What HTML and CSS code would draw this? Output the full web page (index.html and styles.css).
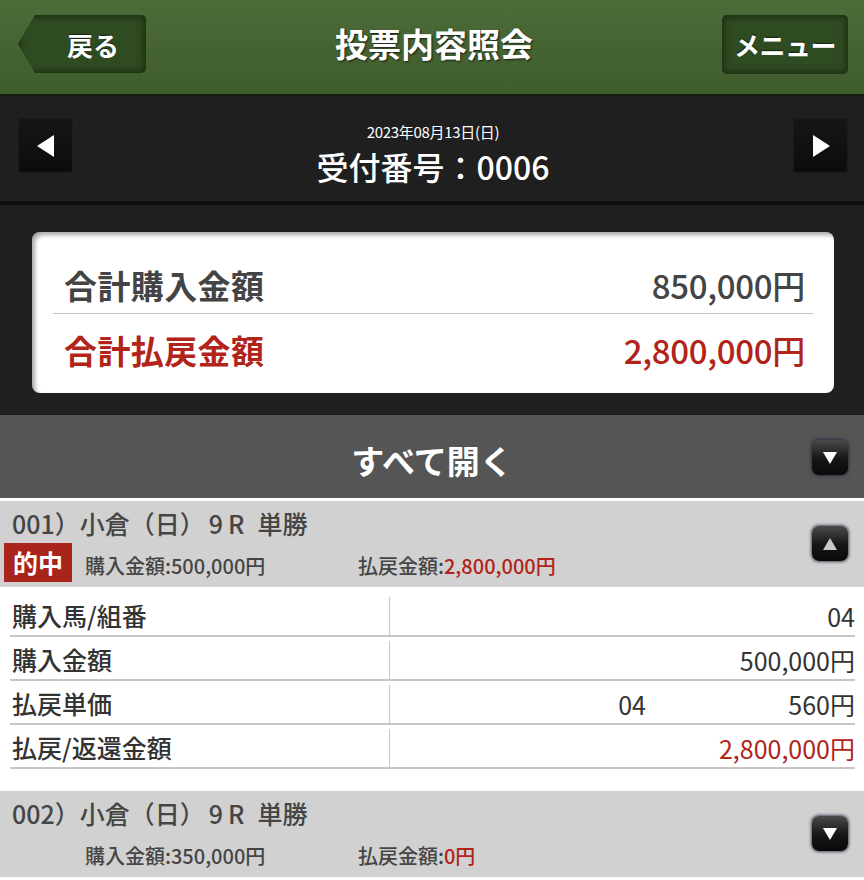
FILE: index.html
```html
<!DOCTYPE html>
<html lang="ja">
<head>
<meta charset="utf-8">
<title>投票内容照会</title>
<link rel="stylesheet" href="styles.css">
</head>
<body>
<header class="topbar">
  <a class="back-btn" href="#">戻る</a>
  <h1 class="title">投票内容照会</h1>
  <a class="menu-btn" href="#">メニュー</a>
</header>

<section class="receipt-nav">
  <button class="nav-btn" type="button" aria-label="前へ">
    <svg width="18" height="22" viewBox="0 0 18 22"><polygon points="17,0 17,22 0,11" fill="#fff"/></svg>
  </button>
  <div class="receipt-info">
    <div class="receipt-date">2023年08月13日(日)</div>
    <div class="receipt-no">受付番号：0006</div>
  </div>
  <button class="nav-btn" type="button" aria-label="次へ">
    <svg width="18" height="22" viewBox="0 0 18 22"><polygon points="1,0 1,22 18,11" fill="#fff"/></svg>
  </button>
</section>

<section class="summary">
  <div class="summary-card">
    <div class="sum-row">
      <span class="sum-label">合計購入金額</span>
      <span class="sum-value">850,000円</span>
    </div>
    <div class="sum-row is-payout">
      <span class="sum-label">合計払戻金額</span>
      <span class="sum-value">2,800,000円</span>
    </div>
  </div>
</section>

<div class="expand-all">
  <span class="expand-label">すべて開く</span>
  <button class="toggle" type="button" aria-label="開く">
    <svg width="14" height="12" viewBox="0 0 14 12"><polygon points="0,0 14,0 7,12" fill="#fff"/></svg>
  </button>
</div>

<article class="bet">
  <div class="bet-head">
    <div class="bet-summary">
      <div class="bet-title">001）<span class="venue">小倉（日）</span><span class="race">9R</span>単勝</div>
      <div class="bet-sub">
        <span class="hit-badge">的中</span>
        <span class="bet-stake">購入金額:500,000円</span>
        <span class="bet-pay">払戻金額:<em>2,800,000円</em></span>
      </div>
    </div>
    <button class="toggle" type="button" aria-label="閉じる">
      <svg width="14" height="12" viewBox="0 0 14 12"><polygon points="0,12 14,12 7,0" fill="#c9c9c9"/></svg>
    </button>
  </div>
  <div class="bet-detail">
    <div class="detail-row">
      <div class="detail-label">購入馬/組番</div>
      <div class="detail-value">04</div>
    </div>
    <div class="detail-row">
      <div class="detail-label">購入金額</div>
      <div class="detail-value">500,000円</div>
    </div>
    <div class="detail-row">
      <div class="detail-label">払戻単価</div>
      <div class="detail-value split"><span class="horse">04</span><span>560円</span></div>
    </div>
    <div class="detail-row">
      <div class="detail-label">払戻/返還金額</div>
      <div class="detail-value payout">2,800,000円</div>
    </div>
  </div>
</article>

<article class="bet">
  <div class="bet-head">
    <div class="bet-summary">
      <div class="bet-title">002）<span class="venue">小倉（日）</span><span class="race">9R</span>単勝</div>
      <div class="bet-sub">
        <span class="hit-badge is-empty"></span>
        <span class="bet-stake">購入金額:350,000円</span>
        <span class="bet-pay">払戻金額:<em>0円</em></span>
      </div>
    </div>
    <button class="toggle" type="button" aria-label="開く">
      <svg width="14" height="12" viewBox="0 0 14 12"><polygon points="0,0 14,0 7,12" fill="#fff"/></svg>
    </button>
  </div>
</article>
</body>
</html>
```

FILE: styles.css
```css
* {
  box-sizing: border-box;
}

html,
body {
  margin: 0;
  padding: 0;
  background: #fff;
}

body {
  font-family: "Noto Sans CJK JP", "Noto Sans", sans-serif;
  color: #444;
  width: 864px;
  overflow: hidden;
}

button {
  font: inherit;
  border: 0;
  padding: 0;
  cursor: pointer;
}

/* ---------- top bar ---------- */
.topbar {
  height: 96px;
  display: flex;
  align-items: flex-start;
  padding: 15px 16px 0 18px;
  background: linear-gradient(#4c6c38, #3f5c2d);
  border-bottom: 2px solid #17200f;
}

.back-btn,
.menu-btn {
  display: flex;
  align-items: center;
  justify-content: center;
  height: 58px;
  color: #fff;
  text-decoration: none;
  font-weight: 700;
  font-size: 26px;
  text-shadow: 0 -1px 1px rgba(0, 0, 0, 0.55);
  background: #2f4b22;
  box-shadow: inset 0 0 6px 2px rgba(20, 35, 12, 0.75);
}

.back-btn {
  width: 128px;
  padding-left: 22px;
  border-radius: 0 5px 5px 0;
  clip-path: polygon(17px 0, 100% 0, 100% 100%, 17px 100%, 0 50%);
}

.menu-btn {
  width: 126px;
  height: 59px;
  border-radius: 5px;
  letter-spacing: -0.5px;
}

.title {
  flex: 1;
  margin: 0;
  text-align: center;
  color: #fff;
  font-size: 33px;
  font-weight: 700;
  line-height: 56px;
  text-shadow: 1px 1px 2px rgba(0, 0, 0, 0.7);
}

/* ---------- receipt navigation ---------- */
.receipt-nav {
  height: 109px;
  display: flex;
  align-items: flex-start;
  justify-content: space-between;
  padding: 22px 16px 0 18px;
  background: #1f1f1f;
  border-bottom: 4px solid #0f0f0f;
}

.nav-btn {
  width: 55px;
  height: 55px;
  display: flex;
  align-items: center;
  justify-content: center;
  border-radius: 4px;
  background: linear-gradient(#161616, #0c0c0c);
  box-shadow: inset 0 0 0 1px #1b1b1b;
}

.receipt-info {
  flex: 1;
  text-align: center;
  color: #fff;
}

.receipt-date {
  font-size: 15px;
  line-height: 22px;
  margin-top: 3px;
  letter-spacing: -0.3px;
}

.receipt-no {
  font-size: 32px;
  line-height: 46px;
  margin-top: 0;
  font-weight: 500;
}

/* ---------- totals ---------- */
.summary {
  background: #202020;
  padding: 27px 30px 22px 32px;
}

.summary-card {
  background: #fff;
  border-radius: 8px;
  padding: 17px 21px 15px;
  box-shadow: inset 3px 3px 4px rgba(0, 0, 0, 0.35);
}

.sum-row {
  height: 64px;
  display: flex;
  align-items: center;
  justify-content: space-between;
  padding: 8px 8px 0 11px;
  font-size: 33px;
  color: #444;
}

.sum-row + .sum-row {
  border-top: 1px solid #c2c2c2;
  height: 65px;
}

.sum-label {
  font-weight: 700;
  letter-spacing: 0.4px;
}

.sum-value {
  font-weight: 500;
  letter-spacing: -0.3px;
}

.sum-row.is-payout {
  color: #b2231a;
}

/* ---------- expand all ---------- */
.expand-all {
  height: 83px;
  position: relative;
  display: flex;
  align-items: center;
  justify-content: center;
  background: #555;
  margin-bottom: 3px;
}

.expand-label {
  color: #fff;
  font-size: 33px;
  font-weight: 700;
  padding-top: 6px;
}

.expand-all .toggle {
  position: absolute;
  right: 16px;
  top: 25px;
}

.toggle {
  width: 36px;
  height: 35px;
  display: flex;
  align-items: center;
  justify-content: center;
  border-radius: 7px;
  background: linear-gradient(#4a4a4a, #151515 55%, #0a0a0a);
  box-shadow: 0 0 3px 1px rgba(25, 35, 55, 0.75);
}

/* ---------- bet item ---------- */
.bet-head {
  height: 86px;
  display: flex;
  align-items: center;
  justify-content: space-between;
  padding: 4px 16px 5px 4px;
  background: #d1d1d1;
}

.bet-summary {
  display: flex;
  flex-direction: column;
}

.bet-title {
  font-size: 25px;
  line-height: 34px;
  padding-left: 8px;
  font-weight: 500;
  color: #454545;
}

.bet-title .race {
  letter-spacing: 5px;
  margin: 0 8px 0 4px;
}

.bet-sub {
  display: flex;
  align-items: center;
  height: 39px;
  margin-top: 3px;
  font-size: 20px;
  font-weight: 500;
  color: #454545;
}

.hit-badge {
  width: 68px;
  height: 39px;
  display: flex;
  align-items: center;
  justify-content: center;
  margin-right: 13px;
  background: #a9241a;
  color: #fff;
  font-size: 25px;
  font-weight: 700;
}

.hit-badge.is-empty {
  background: transparent;
}

.bet-stake {
  width: 273px;
  padding-top: 6px;
}

.bet-pay {
  padding-top: 6px;
}

.bet-pay em {
  font-style: normal;
  color: #b2231a;
}

.bet-detail {
  padding: 6px 9px 22px 10px;
  background: #fff;
}

.detail-row {
  height: 44px;
  display: grid;
  grid-template-columns: 379px 1fr;
  border-bottom: 2px solid #c6c6c6;
  font-size: 25px;
  color: #333;
}

.detail-label {
  display: flex;
  align-items: center;
  padding: 2px 0 0 2px;
  font-weight: 500;
}

.detail-value {
  display: flex;
  align-items: center;
  justify-content: flex-end;
  margin-top: 4px;
  border-left: 1px solid #c6c6c6;
}

.detail-value.split {
  display: grid;
  grid-template-columns: 256px 1fr;
  justify-items: end;
  align-items: center;
}

.detail-value.payout {
  color: #b2231a;
}
```
